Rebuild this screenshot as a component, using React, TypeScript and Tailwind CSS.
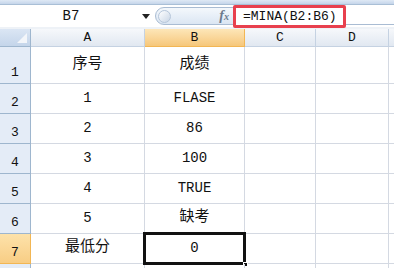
import React from 'react';

const cols = ['A', 'B', 'C', 'D'];
const colWidths = ['w-[114px]', 'w-[100px]', 'w-[71px]', 'w-[73px]'];

const rows: Array<{ n: number; a: string; b: string; h: string }> = [
  { n: 1, a: '序号', b: '成绩', h: 'h-[37px]' },
  { n: 2, a: '1', b: 'FLASE', h: 'h-[30px]' },
  { n: 3, a: '2', b: '86', h: 'h-[30px]' },
  { n: 4, a: '3', b: '100', h: 'h-[30px]' },
  { n: 5, a: '4', b: 'TRUE', h: 'h-[30px]' },
  { n: 6, a: '5', b: '缺考', h: 'h-[30px]' },
  { n: 7, a: '最低分', b: '0', h: 'h-[30px]' },
  { n: 8, a: '', b: '', h: 'h-[30px]' },
];

const font = "font-['Liberation_Mono','Noto_Sans_CJK_SC',monospace]";

// CJK text looks bigger in the shot than the latin values
const isCjk = (s: string) => /[\u4e00-\u9fff]/.test(s);

function Value({ text }: { text: string }) {
  return <span className={isCjk(text) ? 'text-[15px]' : 'text-[14px]'}>{text}</span>;
}

export default function App() {
  return (
    <div className={`w-[394px] h-[268px] overflow-hidden bg-white ${font} text-[#111]`}>
      {/* ribbon edge */}
      <div className="h-[5px] bg-gradient-to-b from-[#dfe9f5] to-[#c5d5ea] border-b border-[#a9bfd6]" />

      {/* formula bar */}
      <div className="flex h-[22px] items-center bg-white">
        <div className="flex w-[155px] items-center">
          <span className="flex-1 text-center text-[14px] leading-none">B7</span>
          <svg width="8" height="5" viewBox="0 0 8 5" className="mr-[5px]">
            <path d="M0 0h8L4 5z" fill="#222" />
          </svg>
        </div>
        <div className="flex h-[18px] w-[79px] items-center justify-between rounded-l-full border border-[#a9bcd3] bg-gradient-to-b from-[#f4f8fc] to-[#dbe6f3] pr-[4px]">
          <div className="ml-[2px] h-[13px] w-[13px] rounded-full border border-[#b6c6da] bg-gradient-to-br from-white to-[#c9d6e6]" />
          <span className="font-['Liberation_Serif',serif] text-[14px] italic font-bold text-[#6c7a8c] leading-none">
            f<span className="text-[10px]">x</span>
          </span>
        </div>
        <div className="ml-[-1px] flex h-[23px] w-[113px] items-center rounded-[2px] border-[3px] border-[#e8404e] pl-[7px] text-[13px] leading-none">
          =MINA(B2:B6)
        </div>
        <div className="h-[18px] flex-1 border-b border-[#a9bcd3]" />
      </div>

      <div className="h-[2px] bg-[#eef2f7]" />

      {/* grid */}
      <div className="flex h-[18px]">
        <div className="relative w-[31px] border-r border-b border-[#9eb6ce] bg-gradient-to-b from-[#dbe6f4] to-[#c4d5ea]">
          <svg width="10" height="10" viewBox="0 0 10 10" className="absolute right-[3px] bottom-[3px]">
            <path d="M10 0V10H0z" fill="#f3f6fa" />
          </svg>
        </div>
        {cols.map((c, i) => (
          <div
            key={c}
            className={`${colWidths[i]} flex items-center justify-center border-r border-b text-[13px] ${
              c === 'B'
                ? 'border-[#f2b654] bg-gradient-to-b from-[#fde6b8] to-[#f6c77a]'
                : 'border-[#c5d2e2] bg-gradient-to-b from-[#f6f8fb] to-[#e1e8f1]'
            }`}
          >
            {c}
          </div>
        ))}
        <div className="flex-1 border-b border-[#c5d2e2] bg-gradient-to-b from-[#f6f8fb] to-[#e1e8f1]" />
      </div>

      {rows.map((r) => (
        <div key={r.n} className={`flex ${r.h}`}>
          <div
            className={`flex w-[31px] items-end justify-center pb-[1px] border-r border-b text-[13px] ${
              r.n === 7
                ? 'border-[#f2b654] bg-gradient-to-b from-[#fde2aa] to-[#f8cd84]'
                : 'border-[#9eb6ce] bg-[#e4ecf7]'
            }`}
          >
            {r.n < 8 ? r.n : ''}
          </div>
          <div className="flex w-[114px] items-center justify-center border-r border-b border-[#d4d9e2]">
            <Value text={r.a} />
          </div>
          <div className="relative flex w-[100px] items-center justify-center border-r border-b border-[#d4d9e2]">
            <Value text={r.b} />
            {r.n === 7 && (
              <>
                <div className="absolute left-[-2px] top-[-2px] right-[-2px] bottom-[-2px] border-[3px] border-[#111]" />
                <div className="absolute right-[-4px] bottom-[-4px] h-[5px] w-[5px] border border-white bg-[#111]" />
              </>
            )}
          </div>
          <div className="w-[71px] border-r border-b border-[#d4d9e2]" />
          <div className="w-[73px] border-r border-b border-[#d4d9e2]" />
          <div className="flex-1 border-b border-[#d4d9e2]" />
        </div>
      ))}
    </div>
  );
}
